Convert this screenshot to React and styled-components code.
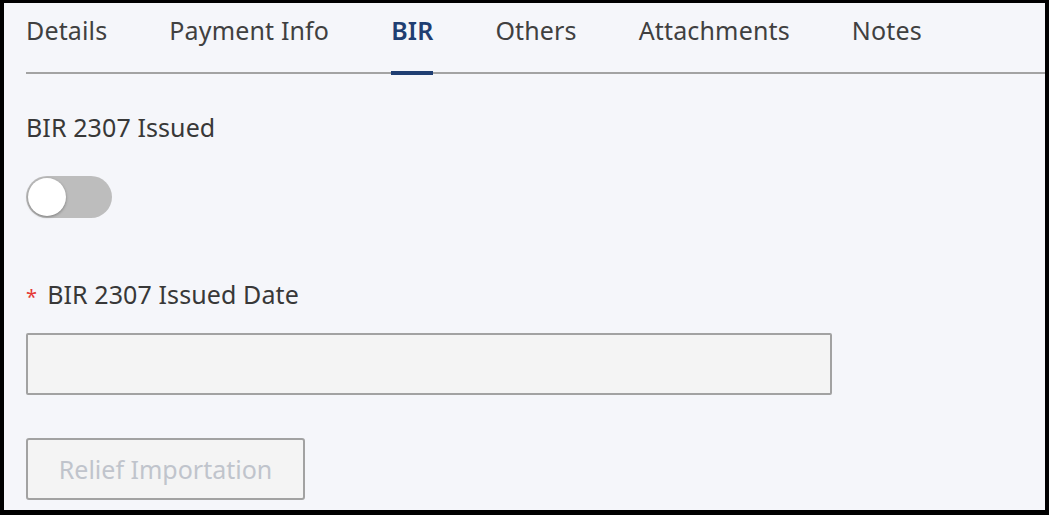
import React, { useState } from "react";
import styled, { createGlobalStyle } from "styled-components";

const Global = createGlobalStyle`
  html, body { margin: 0; padding: 0; background: #000; }
  body { font-family: "Noto Sans", "Open Sans", sans-serif; }
  * { box-sizing: border-box; }
`;

const Frame = styled.div`
  width: 1049px;
  height: 515px;
  border-style: solid;
  border-color: #000;
  border-width: 3px 4px 5px 4px;
  background: #f5f6fa;
  overflow: hidden;
`;

const TabBar = styled.nav`
  display: flex;
  gap: 62px;
  margin-left: 22px;
  height: 71px;
  border-bottom: 2px solid #a3a3a3;
`;

const Tab = styled.div`
  display: flex;
  align-items: center;
  padding-bottom: 14px;
  font-size: 25px;
  letter-spacing: 0.15px;
  color: ${(p) => (p.$active ? "#1f3e72" : "#404040")};
  font-weight: ${(p) => (p.$active ? 600 : 400)};
  border-bottom: 4px solid ${(p) => (p.$active ? "#1f3e72" : "transparent")};
  margin-bottom: -3px;
  cursor: pointer;
`;

const Body = styled.div`
  padding: 0 0 0 22px;
  display: flex;
  flex-direction: column;
  align-items: flex-start;
`;

const Label = styled.div`
  font-size: 25px;
  letter-spacing: 0.1px;
  color: #383838;
  line-height: 30px;
  margin-top: ${(p) => p.$mt}px;
`;

const Star = styled.span`
  color: #e53935;
  font-size: 20px;
  margin-right: 10px;
`;

const Switch = styled.button`
  margin-top: 34px;
  width: 86px;
  height: 42px;
  border-radius: 21px;
  border: none;
  background: #bdbdbd;
  padding: 2px;
  display: flex;
  align-items: center;
  cursor: pointer;
`;

const Knob = styled.span`
  width: 38px;
  height: 38px;
  border-radius: 50%;
  background: #fff;
  box-shadow: 0 1px 3px rgba(0, 0, 0, 0.35);
`;

const Input = styled.input`
  margin-top: 21px;
  width: 806px;
  height: 62px;
  background: #f4f4f4;
  border: 2px solid #a2a2a2;
  border-radius: 2px;
  font-size: 20px;
  padding: 0 12px;
`;

const Button = styled.button`
  margin-top: 43px;
  width: 279px;
  height: 62px;
  background: #f4f4f4;
  border: 2px solid #a2a2a2;
  border-radius: 3px;
  font-family: inherit;
  font-size: 25px;
  color: #c0c4cc;
`;

const tabs = ["Details", "Payment Info", "BIR", "Others", "Attachments", "Notes"];

export default function App() {
  const [on, setOn] = useState(false);
  return (
    <>
      <Global />
      <Frame>
        <TabBar>
          {tabs.map((t) => (
            <Tab key={t} $active={t === "BIR"}>{t}</Tab>
          ))}
        </TabBar>
        <Body>
          <Label $mt={38}>BIR 2307 Issued</Label>
          <Switch onClick={() => setOn(!on)}>
            <Knob />
          </Switch>
          <Label $mt={61}>
            <Star>*</Star>BIR 2307 Issued Date
          </Label>
          <Input disabled />
          <Button disabled>Relief Importation</Button>
        </Body>
      </Frame>
    </>
  );
}
